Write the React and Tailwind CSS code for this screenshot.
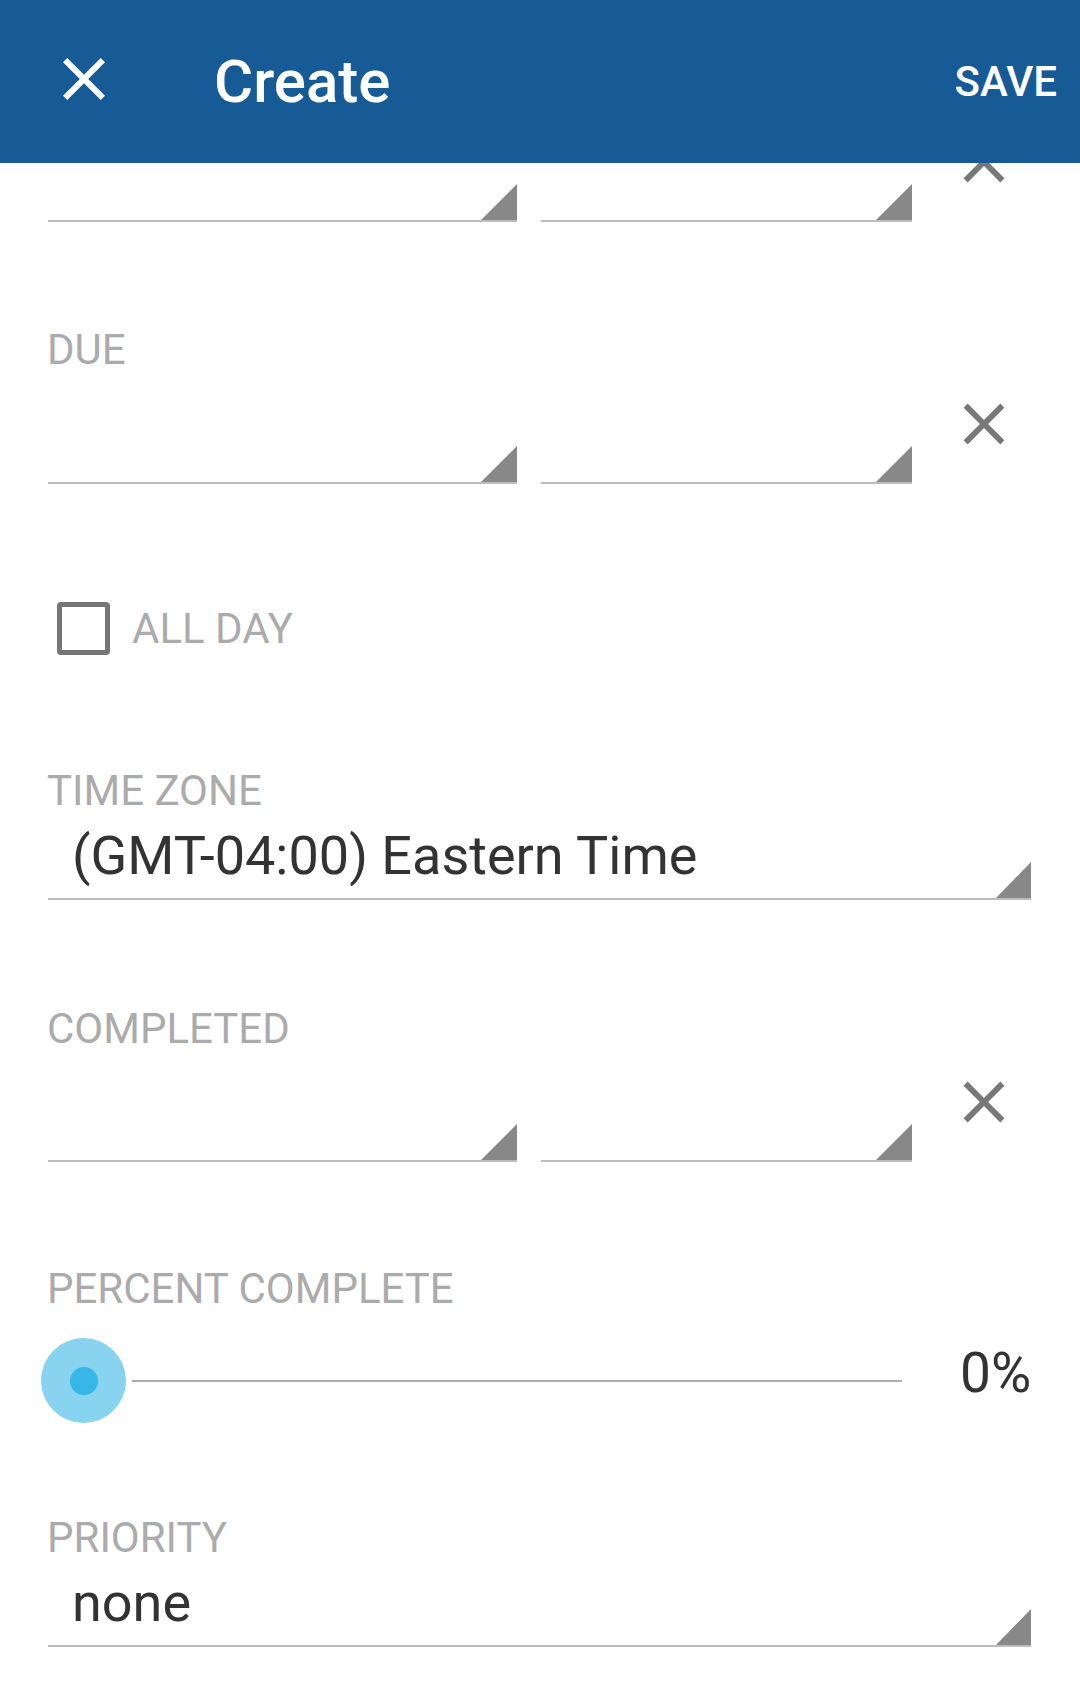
import React from 'react'

const CLOSE_PATH = 'M19 6.41L17.59 5 12 10.59 6.41 5 5 6.41 10.59 12 5 17.59 6.41 19 12 13.41 17.59 19 19 17.59 13.41 12z'

function CloseIcon({ className, color, size = 70 }) {
    return (
        <svg viewBox="0 0 24 24" width={size} height={size} className={className}>
            <path d={CLOSE_PATH} fill={color} />
        </svg>
    )
}

function Corner({ w = 36 }) {
    return (
        <svg width={w} height="36" viewBox={`0 0 ${w} 36`} className="shrink-0">
            <polygon points={`${w},0 ${w},36 0,36`} fill="#888888" />
        </svg>
    )
}

function Label({ className = '', children }) {
    return (
        <div className={`pl-[47px] text-[42px] leading-[48px] text-[#ababab] ${className}`}>{children}</div>
    )
}

function DateRow({ className = '' }) {
    return (
        <div className={`flex items-end pl-[48px] ${className}`}>
            <div className="w-[469px] h-[62px] border-b-2 border-[#bdbdbd] flex items-end justify-end">
                <Corner />
            </div>
            <div className="ml-[24px] w-[371px] h-[62px] border-b-2 border-[#bdbdbd] flex items-end justify-end">
                <Corner />
            </div>
            <CloseIcon className="ml-[37px] mb-[25px] shrink-0" color="#787878" />
        </div>
    )
}

function SelectField({ value, className = '' }) {
    return (
        <div className={`ml-[48px] w-[983px] border-b-2 border-[#bdbdbd] flex items-end justify-between ${className}`}>
            <span className="pl-[24px] mb-[12px] text-[54px] leading-[60px] text-[#333333]">{value}</span>
            <Corner w={35} />
        </div>
    )
}

export default function App() {
    return (
        <div className="w-[1080px] min-h-[1699px] bg-white overflow-hidden font-['Roboto',sans-serif]">
            <header className="relative z-10 h-[163px] bg-[#165a96] flex items-center pl-[48px] pr-[23px]">
                <CloseIcon className="mb-[6px] shrink-0" color="#ffffff" size={72} />
                <h1 className="ml-[94px] text-[60px] leading-[70px] font-medium text-white">Create</h1>
                <button className="ml-auto text-[42px] leading-[50px] font-medium text-white">SAVE</button>
            </header>

            <DateRow className="-mt-[36px]" />

            <Label className="mt-[104px]">DUE</Label>
            <DateRow className="mt-[15px]" />

            <div className="mt-[118px] h-[53px] flex items-center pl-[57px]">
                <div className="w-[53px] h-[53px] border-[5px] border-[#767676] rounded-[4px] shrink-0" />
                <span className="ml-[22px] text-[42px] leading-[48px] text-[#ababab]">ALL DAY</span>
            </div>

            <Label className="mt-[112px]">TIME ZONE</Label>
            <SelectField className="mt-[11px]" value="(GMT-04:00) Eastern Time" />

            <Label className="mt-[105px]">COMPLETED</Label>
            <DateRow className="mt-[14px]" />

            <Label className="mt-[103px]">PERCENT COMPLETE</Label>
            <div className="mt-[25px] h-[85px] flex items-center pl-[41px]">
                <div className="w-[85px] h-[85px] rounded-full bg-[#88d3f0] flex items-center justify-center shrink-0">
                    <div className="w-[28px] h-[28px] rounded-full bg-[#37b7e7]" />
                </div>
                <div className="ml-[6px] w-[770px] h-[2px] bg-[#adadad] shrink-0" />
                <span className="ml-[58px] mb-[15px] text-[55px] leading-[64px] text-[#333333]">0%</span>
            </div>

            <Label className="mt-[91px]">PRIORITY</Label>
            <SelectField className="mt-[11px]" value="none" />
        </div>
    )
}
